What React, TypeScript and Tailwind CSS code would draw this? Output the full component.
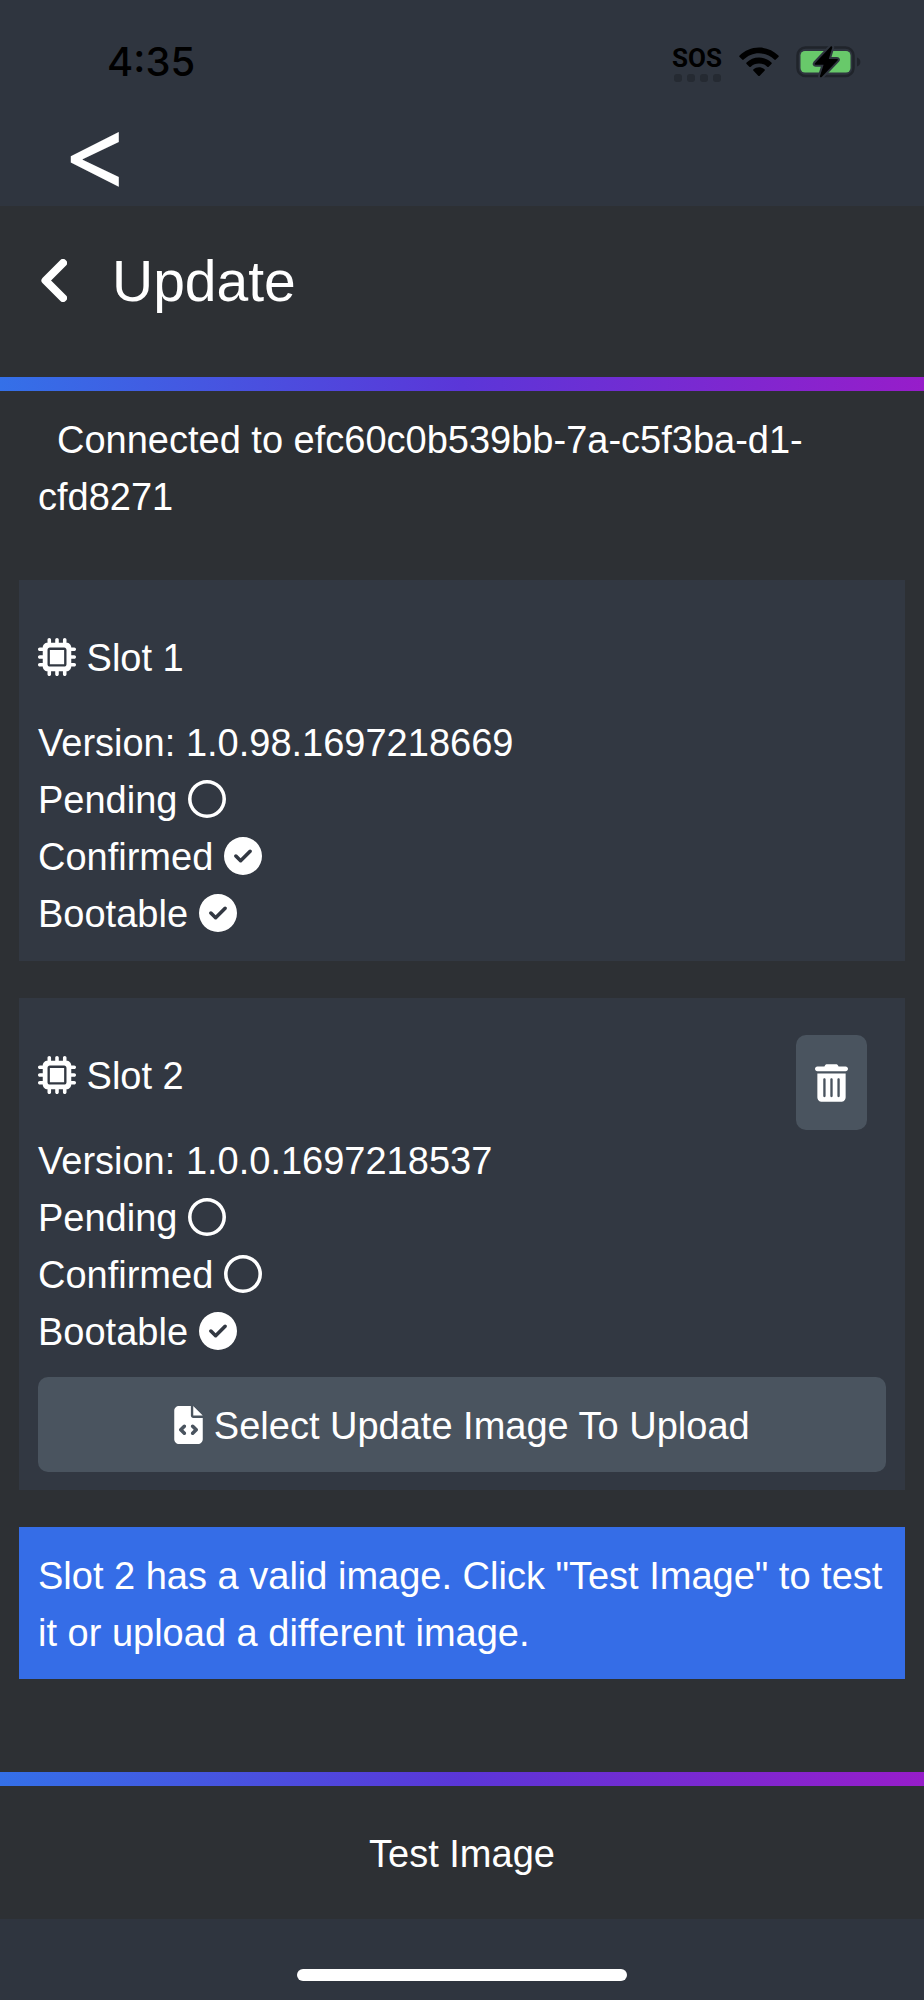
import type { ReactNode } from 'react'
import {
  FaCircleCheck,
  FaFileCode,
  FaMicrochip,
  FaRegCircle,
  FaTrashCan
} from 'react-icons/fa6'

interface Slot {
  id: number
  version: string
  pending: boolean
  confirmed: boolean
  bootable: boolean
}

const slots: Slot[] = [
  { id: 1, version: '1.0.98.1697218669', pending: false, confirmed: true, bootable: true },
  { id: 2, version: '1.0.0.1697218537', pending: false, confirmed: false, bootable: true }
]

function StatusBar() {
  return (
    <div className="flex h-[124px] items-center justify-between pl-[107px] pr-[62px] text-black">
      <time className="font-['Inter',sans-serif] text-[40px] font-medium leading-none">4:35</time>
      <div className="flex items-center gap-[17px]">
        <div className="flex flex-col items-center gap-1 pt-1">
          <span className="font-['Roboto',sans-serif] text-[26px] font-bold leading-[24px]">SOS</span>
          <div className="flex gap-[5px]">
            <span className="h-2 w-2 rounded-[3px] bg-[#252a32]" />
            <span className="h-2 w-2 rounded-[3px] bg-[#252a32]" />
            <span className="h-2 w-2 rounded-[3px] bg-[#252a32]" />
            <span className="h-2 w-2 rounded-[3px] bg-[#252a32]" />
          </div>
        </div>
        <svg aria-hidden="true" viewBox="0 0 40 30" className="h-[30px] w-10" fill="currentColor">
          <path d="M20 .5c7.600 0 14.400 3.100 19.400 8 .5.5.5 1 0 1.500l-2.600 2.600c-.5.5-1 .5-1.500 0C31.300 8.700 25.900 6.300 20 6.300S8.700 8.700 4.700 12.600c-.5.5-1 .5-1.500 0L.6 10c-.5-.5-.5-1 0-1.500C5.600 3.600 12.400.5 20 .5z" />
          <path d="M20 10.500c4.800 0 9.200 1.900 12.400 5 .5.5.5 1 0 1.500l-2.700 2.700c-.5.5-1 .5-1.500 0-2.100-2-5-3.200-8.200-3.200s-6.100 1.200-8.200 3.200c-.5.5-1 .5-1.500 0L7.600 17c-.5-.5-.5-1 0-1.500 3.200-3.100 7.600-5 12.400-5z" />
          <path d="M20 20.200c2.100 0 4 .8 5.500 2.100.5.5.5 1 0 1.500l-4.700 4.900c-.5.5-1.100.5-1.600 0l-4.700-4.900c-.5-.5-.5-1 0-1.500 1.500-1.300 3.400-2.100 5.500-2.100z" />
        </svg>
        <svg aria-hidden="true" viewBox="0 0 66 32" className="h-8 w-[66px]">
          <rect x="1.5" y="1.5" width="56" height="28.5" rx="8" fill="none" stroke="#20242b" strokeWidth="2.5" />
          <rect x="4.5" y="5" width="50" height="21.5" rx="4.5" fill="#68c96a" />
          <path d="M61 11.500c2.200.8 3.400 2.400 3.400 4.500s-1.200 3.700-3.400 4.500z" fill="#20242b" />
          <path
            d="M34.500.8 19 17.200c-.6.7-.3 1.500.6 1.500h8L24 30c-.3 1.200.8 1.800 1.700.9l15.800-16.500c.7-.7.4-1.500-.5-1.500h-8.200L36.200 1.700c.3-1.200-.8-1.800-1.700-.9z"
            fill="#000"
            stroke="#2f353f"
            strokeWidth="4"
            paintOrder="stroke"
          />
        </svg>
      </div>
    </div>
  )
}

function GradientBar() {
  return <div className="h-[14px] bg-linear-to-r/srgb from-[#3470e8] via-[#5b36d8] to-[#971dca]" />
}

function StatusLine({ label, active }: Readonly<{ label: string; active: boolean }>) {
  const Icon = active ? FaCircleCheck : FaRegCircle

  return (
    <div>
      {label} <Icon aria-label={active ? 'yes' : 'no'} className="inline h-[38px] w-[38px] align-[-5px]" />
    </div>
  )
}

function SlotCard({ slot, children }: Readonly<{ slot: Slot; children?: ReactNode }>) {
  return (
    <section className="relative mx-[19px] mb-[37px] bg-[#323842] px-[19px] pb-[18px] pt-[50px]">
      <h2 className="mb-7">
        <FaMicrochip aria-hidden="true" className="inline h-[38px] w-[38px] align-[-5px]" /> Slot {slot.id}
      </h2>
      <div>Version: {slot.version}</div>
      <StatusLine label="Pending" active={slot.pending} />
      <StatusLine label="Confirmed" active={slot.confirmed} />
      <StatusLine label="Bootable" active={slot.bootable} />
      {children}
    </section>
  )
}

function App() {
  return (
    <div className="flex min-h-screen flex-col bg-[#2d3034] font-['Liberation_Sans',Arial,sans-serif] text-[38px] leading-[57px] text-white">
      <div className="h-[206px] bg-[#2f353f]">
        <StatusBar />
        <button aria-label="Back to app" className="ml-[62px] block font-['Inter',sans-serif] text-[104px] leading-[54px]">
          &lt;
        </button>
      </div>

      <header className="flex h-[171px] items-start px-[38px] pt-8">
        <button aria-label="Back" className="mr-[42px] flex h-[84px] items-center px-[3px]">
          <svg
            aria-hidden="true"
            viewBox="0 0 26 43"
            className="h-[43px] w-[26px]"
            fill="none"
            stroke="currentColor"
            strokeWidth="8"
            strokeLinecap="round"
            strokeLinejoin="round"
          >
            <path d="M22 4 4.500 21.500 22 39" />
          </svg>
        </button>
        <h1 className="text-[57px] leading-[86px]">Update</h1>
      </header>
      <GradientBar />

      <main className="flex-1">
        <p className="mb-[54px] px-[38px] pt-[21px] indent-[19px]">Connected to efc60c0b539bb-7a-c5f3ba-d1-cfd8271</p>

        <SlotCard slot={slots[0]} />
        <SlotCard slot={slots[1]}>
          <button
            aria-label="Erase slot 2"
            className="absolute right-[38px] top-[37px] flex h-[95px] items-center rounded-[10px] bg-[#4a545f] px-[19px]"
          >
            <FaTrashCan className="h-[38px] w-[33px]" />
          </button>
          <button className="mt-4 block h-[95px] w-full rounded-[10px] bg-[#4a545f] pt-1">
            <FaFileCode aria-hidden="true" className="inline h-[38px] w-[29px] align-[-5px]" /> Select Update Image To Upload
          </button>
        </SlotCard>

        <p role="status" className="mx-[19px] bg-[#356de7] px-[19px] pb-[17px] pt-[21px]">
          Slot 2 has a valid image. Click "Test Image" to test it or upload a different image.
        </p>
      </main>

      <GradientBar />
      <footer>
        <button className="block w-full pb-9 pt-10">Test Image</button>
        <div className="flex h-[81px] justify-center bg-[#2f353f] pt-[50px]">
          <div className="h-3 w-[330px] rounded-full bg-white" />
        </div>
      </footer>
    </div>
  )
}

export default App
